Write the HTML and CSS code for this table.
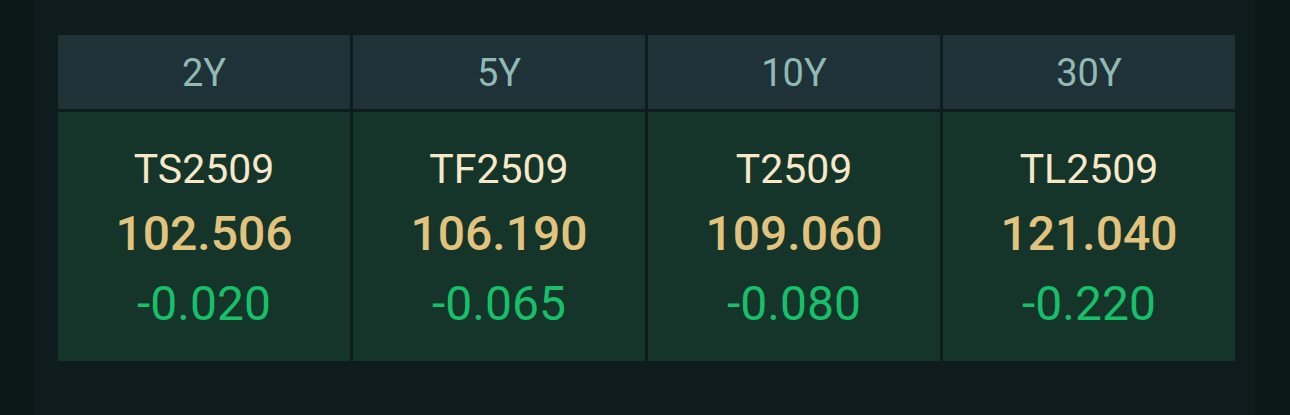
FILE: index.html
```html
<!DOCTYPE html>
<html lang="zh">
<head>
<meta charset="utf-8">
<title>国债期货</title>
<link rel="stylesheet" href="styles.css">
</head>
<body>
<div class="panel">
  <div class="grid">
    <div class="head">2Y</div>
    <div class="head">5Y</div>
    <div class="head">10Y</div>
    <div class="head">30Y</div>
    <div class="cell">
      <div class="code">TS2509</div>
      <div class="price">102.506</div>
      <div class="chg">-0.020</div>
    </div>
    <div class="cell">
      <div class="code">TF2509</div>
      <div class="price">106.190</div>
      <div class="chg">-0.065</div>
    </div>
    <div class="cell">
      <div class="code">T2509</div>
      <div class="price">109.060</div>
      <div class="chg">-0.080</div>
    </div>
    <div class="cell">
      <div class="code">TL2509</div>
      <div class="price">121.040</div>
      <div class="chg">-0.220</div>
    </div>
  </div>
</div>
</body>
</html>
```
FILE: styles.css
```css
html, body {
  margin: 0;
  padding: 0;
  height: 100%;
}
body {
  background: #0a1818;
  font-family: Roboto, "Noto Sans", sans-serif;
}
.panel {
  margin: 0 35px 0 34px;
  height: 100%;
  box-sizing: border-box;
  background: #0e1c1d;
  padding: 35px 20px 0 24px;
}
.grid {
  display: grid;
  grid-template-columns: repeat(4, 292px);
  grid-template-rows: 74px 249px;
  gap: 3px;
}
.head {
  background: #1f3238;
  color: #90bab3;
  font-size: 38px;
  line-height: 74px;
  padding-top: 1px;
  box-sizing: border-box;
  text-align: center;
}
.cell {
  background: #15352a;
  display: flex;
  flex-direction: column;
  align-items: center;
  padding-top: 25px;
  box-sizing: border-box;
}
.code {
  color: #f6e8c9;
  font-size: 41px;
  line-height: 64px;
}
.price {
  color: #e2c37e;
  font-size: 48px;
  font-weight: 500;
  line-height: 66px;
}
.chg {
  color: #17bf69;
  font-size: 48px;
  line-height: 74px;
}
```
